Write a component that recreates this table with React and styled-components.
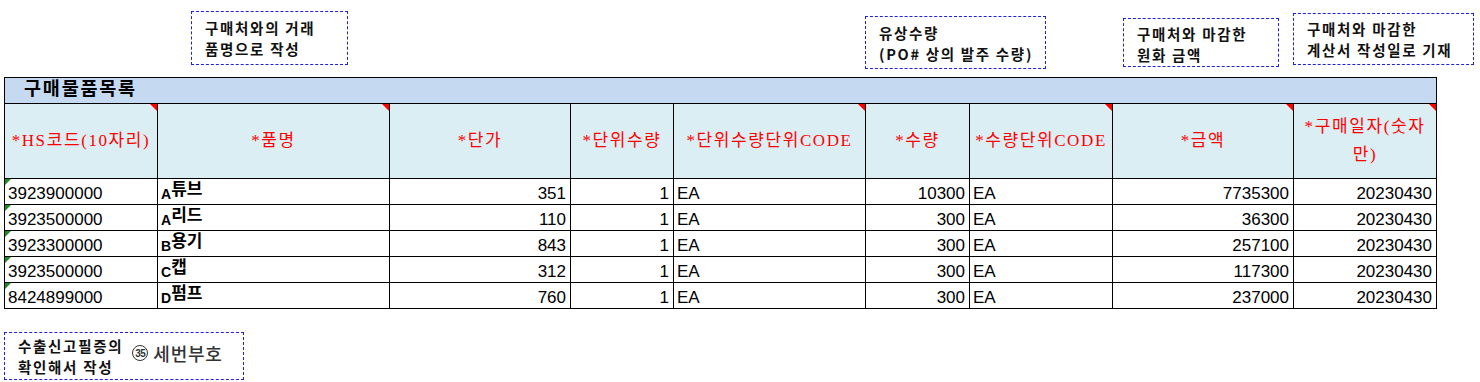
import React from 'react'
import styled, { createGlobalStyle } from 'styled-components'

const GlobalStyle = createGlobalStyle`
    html, body { margin: 0; padding: 0; background: #fff; }
    body { font-family: "Liberation Sans", "Noto Sans CJK KR", sans-serif; }
`

const columns = [
    { title: '*HS코드(10자리)', width: 153, flag: true },
    { title: '*품명', width: 232, flag: true },
    { title: '*단가', width: 181 },
    { title: '*단위수량', width: 103 },
    { title: '*단위수량단위CODE', width: 192, flag: true },
    { title: '*수량', width: 104 },
    { title: '*수량단위CODE', width: 143, flag: true },
    { title: '*금액', width: 181, flag: true },
    { title: '*구매일자(숫자만)', width: 143, flag: true },
]

const rows = [
    { hs: '3923900000', code: 'A', name: '튜브', price: 351, unit: 1, qty: 10300, amount: 7735300, date: '20230430', h: 25 },
    { hs: '3923500000', code: 'A', name: '리드', price: 110, unit: 1, qty: 300, amount: 36300, date: '20230430', h: 26 },
    { hs: '3923300000', code: 'B', name: '용기', price: 843, unit: 1, qty: 300, amount: 257100, date: '20230430', h: 26 },
    { hs: '3923500000', code: 'C', name: '캡', price: 312, unit: 1, qty: 300, amount: 117300, date: '20230430', h: 25 },
    { hs: '8424899000', code: 'D', name: '펌프', price: 760, unit: 1, qty: 300, amount: 237000, date: '20230430', h: 26 },
]

function App() {
    return (
        <Sheet>
            <GlobalStyle />
            <Callout left={191} top={11} width={157} height={54}>
                <NoteText>구매처와의 거래<br />품명으로 작성</NoteText>
            </Callout>
            <Callout left={865} top={16} width={181} height={53}>
                <NoteText pt={5}>유상수량<br />(PO# 상의 발주 수량)</NoteText>
            </Callout>
            <Callout left={1123} top={18} width={156} height={49}>
                <NoteText pt={4}>구매처와 마감한<br />원화 금액</NoteText>
            </Callout>
            <Callout left={1293} top={13} width={181} height={52}>
                <NoteText pt={4}>구매처와 마감한<br />계산서 작성일로 기재</NoteText>
            </Callout>

            <Grid>
                <colgroup>
                    {columns.map((c) => <col key={c.title} style={{ width: c.width }} />)}
                </colgroup>
                <tbody>
                    <tr>
                        <TitleCell colSpan={columns.length}>구매물품목록</TitleCell>
                    </tr>
                    <tr>
                        {columns.map((c) => (
                            <HeadCell key={c.title}>
                                {c.title}
                                {c.flag && <RedFlag />}
                            </HeadCell>
                        ))}
                    </tr>
                    {rows.map((r, i) => (
                        <tr key={i}>
                            <Cell h={r.h}>
                                <GreenFlag />
                                {r.hs}
                            </Cell>
                            <Cell h={r.h}>
                                <NameCode>{r.code}</NameCode>
                                <NameText>{r.name}</NameText>
                            </Cell>
                            <Cell h={r.h} right>{r.price}</Cell>
                            <Cell h={r.h} right>{r.unit}</Cell>
                            <Cell h={r.h}>EA</Cell>
                            <Cell h={r.h} right>{r.qty}</Cell>
                            <Cell h={r.h}>EA</Cell>
                            <Cell h={r.h} right>{r.amount}</Cell>
                            <Cell h={r.h} right>{r.date}</Cell>
                        </tr>
                    ))}
                </tbody>
            </Grid>

            <BottomNote>
                <NoteText pt={0}>수출신고필증의<br />확인해서 작성</NoteText>
                <RefMark>
                    <Circled>35</Circled>
                    세번부호
                </RefMark>
            </BottomNote>
        </Sheet>
    )
}

export default App

const Sheet = styled.div`
    position: relative;
    width: 1480px;
    height: 382px;
    padding: 77px 0 0 4px;
    box-sizing: border-box;
    overflow: hidden;
`

const Callout = styled.div`
    position: absolute;
    left: ${(p) => p.left}px;
    top: ${(p) => p.top}px;
    width: ${(p) => p.width}px;
    height: ${(p) => p.height}px;
    box-sizing: border-box;
    border: 1px dashed #1f1fe0;
    padding-left: 13px;
    background: #fff;
`

const NoteText = styled.div`
    padding-top: ${(p) => (p.pt === undefined ? 5 : p.pt)}px;
    font-family: "Noto Sans CJK KR", sans-serif;
    font-size: 14.5px;
    font-weight: 700;
    line-height: 21px;
    letter-spacing: 1.7px;
    color: #111;
    white-space: nowrap;
`

const Grid = styled.table`
    border-collapse: collapse;
    table-layout: fixed;
    width: 1432px;
    font-family: "Liberation Sans", "Noto Sans CJK KR", sans-serif;
`

const TitleCell = styled.td`
    height: 25px;
    padding: 0 0 0 19px;
    background: #c5d9f1;
    border: 1px solid #000;
    font-family: "Noto Sans CJK KR", sans-serif;
    font-size: 18.5px;
    font-weight: 700;
    letter-spacing: 1.8px;
    line-height: 19px;
    vertical-align: top;
    color: #000;
`

const HeadCell = styled.td`
    position: relative;
    height: 74px;
    padding: 0 2px;
    background: #daeef3;
    border: 1px solid #000;
    color: #ff0000;
    font-family: "Liberation Serif", "Noto Sans CJK KR", serif;
    font-size: 17px;
    letter-spacing: 1.6px;
    line-height: 28px;
    text-align: center;
    vertical-align: middle;
`

const RedFlag = styled.span`
    position: absolute;
    top: 0;
    right: 0;
    width: 0;
    height: 0;
    border-top: 7px solid #ff0000;
    border-left: 7px solid transparent;
`

const Cell = styled.td`
    position: relative;
    height: ${(p) => p.h - 1}px;
    padding: 0 4px 0 3px;
    border: 1px solid #000;
    font-size: 17px;
    line-height: 20px;
    color: #000;
    text-align: ${(p) => (p.right ? 'right' : 'left')};
    vertical-align: bottom;
    white-space: nowrap;
`

const GreenFlag = styled.span`
    position: absolute;
    top: 0;
    left: 0;
    width: 0;
    height: 0;
    border-top: 6px solid #1f8a1f;
    border-right: 6px solid transparent;
`

const NameCode = styled.span`
    font-size: 14px;
    font-weight: 700;
`

const NameText = styled.span`
    font-family: "Noto Sans CJK KR", sans-serif;
    font-size: 17px;
    font-weight: 700;
    vertical-align: 4px;
    line-height: 17px;
`

const BottomNote = styled.div`
    display: flex;
    align-items: center;
    gap: 9px;
    width: 240px;
    height: 48px;
    margin-top: 23px;
    box-sizing: border-box;
    border: 1px dashed #1f1fe0;
    padding-left: 13px;
`

const RefMark = styled.span`
    display: flex;
    align-items: center;
    gap: 5px;
    margin-top: -6px;
    font-family: "Noto Sans CJK KR", sans-serif;
    font-size: 18px;
    font-weight: 500;
    color: #333;
    letter-spacing: 0.8px;
    white-space: nowrap;
`

const Circled = styled.span`
    display: inline-flex;
    align-items: center;
    justify-content: center;
    width: 14px;
    height: 14px;
    border: 1.4px solid #333;
    border-radius: 50%;
    font-family: "Liberation Sans", sans-serif;
    font-size: 10px;
    font-weight: 700;
    letter-spacing: -0.5px;
`
